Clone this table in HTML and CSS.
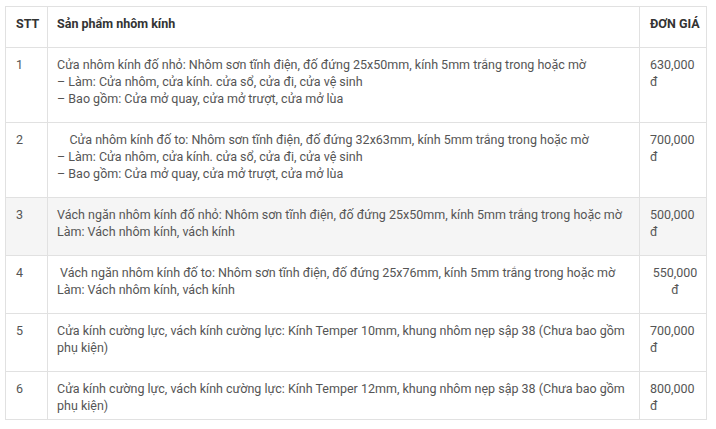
FILE: index.html
```html
<!DOCTYPE html>
<html lang="vi">
<head>
<meta charset="utf-8">
<title>Bảng giá nhôm kính</title>
<link rel="stylesheet" href="styles.css">
</head>
<body>
<div class="wrap">
<table class="price-table">
  <colgroup>
    <col class="c-stt">
    <col class="c-name">
    <col class="c-price">
  </colgroup>
  <thead>
    <tr>
      <th>STT</th>
      <th>Sản phẩm nhôm kính</th>
      <th class="nowrap">ĐƠN GIÁ</th>
    </tr>
  </thead>
  <tbody>
    <tr>
      <td>1</td>
      <td>Cửa nhôm kính đố nhỏ: Nhôm sơn tĩnh điện, đố đứng 25x50mm, kính 5mm trắng trong hoặc mờ<br>– Làm: Cửa nhôm, cửa kính. cửa sổ, cửa đi, cửa vệ sinh<br>– Bao gồm: Cửa mở quay, cửa mở trượt, cửa mở lùa</td>
      <td>630,000 đ</td>
    </tr>
    <tr>
      <td>2</td>
      <td>&nbsp;&nbsp;&nbsp;&nbsp;Cửa nhôm kính đố to: Nhôm sơn tĩnh điện, đố đứng 32x63mm, kính 5mm trắng trong hoặc mờ<br>– Làm: Cửa nhôm, cửa kính. cửa sổ, cửa đi, cửa vệ sinh<br>– Bao gồm: Cửa mở quay, cửa mở trượt, cửa mở lùa</td>
      <td>700,000 đ</td>
    </tr>
    <tr class="shade">
      <td>3</td>
      <td>Vách ngăn nhôm kính đố nhỏ: Nhôm sơn tĩnh điện, đố đứng 25x50mm, kính 5mm trắng trong hoặc mờ<br>Làm: Vách nhôm kính, vách kính</td>
      <td>500,000 đ</td>
    </tr>
    <tr>
      <td>4</td>
      <td>&nbsp;Vách ngăn nhôm kính đố to: Nhôm sơn tĩnh điện, đố đứng 25x76mm, kính 5mm trắng trong hoặc mờ<br>Làm: Vách nhôm kính, vách kính</td>
      <td class="center">550,000 đ</td>
    </tr>
    <tr>
      <td>5</td>
      <td>Cửa kính cường lực, vách kính cường lực: Kính Temper 10mm, khung nhôm nẹp sập 38 (Chưa bao gồm phụ kiện)</td>
      <td>700,000 đ</td>
    </tr>
    <tr class="last">
      <td>6</td>
      <td>Cửa kính cường lực, vách kính cường lực: Kính Temper 12mm, khung nhôm nẹp sập 38 (Chưa bao gồm phụ kiện)</td>
      <td>800,000 đ</td>
    </tr>
  </tbody>
</table>
</div>
</body>
</html>
```

FILE: styles.css
```css
html, body {
  margin: 0;
  padding: 0;
  background: #ffffff;
}

.wrap {
  padding: 6px 0 0 5px;
}

.price-table {
  border-collapse: collapse;
  table-layout: fixed;
  width: 701px;
  font-family: Roboto, "Liberation Sans", Arial, sans-serif;
  font-size: 12.5px;
  line-height: 17px;
  color: #555555;
}

.c-stt { width: 42px; }
.c-name { width: 592px; }
.c-price { width: 67px; }

.price-table th,
.price-table td {
  border: 1px solid #e1e1e1;
  padding: 8px 10px 15px 9px;
  text-align: left;
  vertical-align: top;
}

.price-table th {
  font-weight: 700;
  color: #333333;
}

.price-table th.nowrap {
  white-space: nowrap;
}

.price-table td:first-child,
.price-table th:first-child {
  padding-left: 10px;
}

.price-table td:last-child,
.price-table th:last-child {
  padding-left: 10px;
  padding-right: 6px;
}

.price-table td.center {
  text-align: center;
}

.shade td {
  background: #f5f5f5;
}

.last td {
  padding-bottom: 5px;
}
```
